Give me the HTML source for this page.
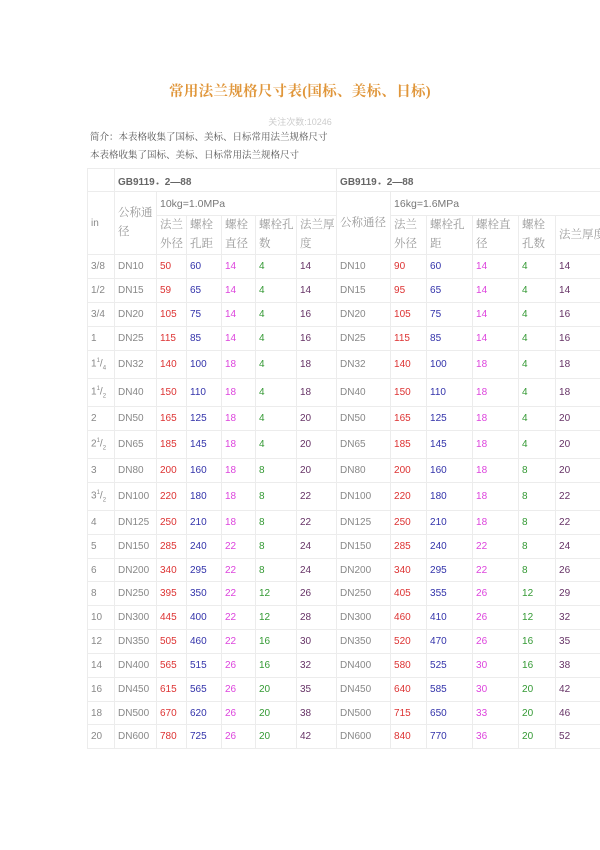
<!DOCTYPE html>
<html><head><meta charset="utf-8"><style>
html,body{margin:0;padding:0;background:#fff;width:600px;height:850px;overflow:hidden;position:relative}
body{font-family:"Liberation Sans","Noto Sans CJK SC",sans-serif}
.t{position:absolute;left:0;width:600px;text-align:center;top:80px;font-family:"Liberation Serif","Noto Serif CJK SC",serif;font-size:14.5px;color:#e0963a;letter-spacing:0.3px;font-weight:bold}
.c{position:absolute;left:0;width:600px;text-align:center;top:115px;font-size:9px;color:#ccc}
.i{position:absolute;left:90px;font-family:"Liberation Serif","Noto Serif CJK SC",serif;font-size:9.5px;color:#555}
table{position:absolute;left:87px;top:168px;border-collapse:collapse;table-layout:fixed;width:540px}
td{border:1px solid #ececec;padding:0 0 0 3px;font-size:10px;color:#888;vertical-align:middle;overflow:hidden;white-space:nowrap}
.h{color:#666;font-weight:bold}
.zh{font-family:"Liberation Serif","Noto Serif CJK SC",serif;color:#999;white-space:normal;line-height:19px;font-size:11.5px;word-break:break-all}
.r{color:#d33}.b{color:#33a}.m{color:#d4d}.g{color:#393}.p{color:#636}
sup,sub{font-size:6px}
</style></head><body>
<div class="t">常用法兰规格尺寸表(国标、美标、日标)</div>
<div class="c">关注次数:10246</div>
<div class="i" style="top:129px">简介：本表格收集了国标、美标、日标常用法兰规格尺寸</div>
<div class="i" style="top:147px">本表格收集了国标、美标、日标常用法兰规格尺寸</div>
<table>
<colgroup><col style="width:27px"><col style="width:42px"><col style="width:30px"><col style="width:35px"><col style="width:34px"><col style="width:41px"><col style="width:40px"><col style="width:54px"><col style="width:36px"><col style="width:46px"><col style="width:46px"><col style="width:37px"><col style="width:72px"></colgroup>
<tr style="height:23px"><td></td><td class="h" colspan="6">GB9119．2—88</td><td class="h" colspan="6">GB9119．2—88</td></tr>
<tr style="height:24px"><td rowspan="2">in</td><td rowspan="2" class="zh">公称通径</td><td colspan="5" style="font-size:10.5px;color:#777">10kg=1.0MPa</td><td rowspan="2" class="zh">公称通径</td><td colspan="5" style="font-size:10.5px;color:#777">16kg=1.6MPa</td></tr>
<tr style="height:38px"><td class="zh">法兰外径</td><td class="zh">螺栓孔距</td><td class="zh">螺栓直径</td><td class="zh">螺栓孔数</td><td class="zh">法兰厚度</td><td class="zh">法兰外径</td><td class="zh">螺栓孔距</td><td class="zh">螺栓直径</td><td class="zh">螺栓孔数</td><td class="zh">法兰厚度</td></tr>
<tr style="height:24px"><td>3/8</td><td>DN10</td><td class="r">50</td><td class="b">60</td><td class="m">14</td><td class="g">4</td><td class="p">14</td><td>DN10</td><td class="r">90</td><td class="b">60</td><td class="m">14</td><td class="g">4</td><td class="p">14</td></tr>
<tr style="height:24px"><td>1/2</td><td>DN15</td><td class="r">59</td><td class="b">65</td><td class="m">14</td><td class="g">4</td><td class="p">14</td><td>DN15</td><td class="r">95</td><td class="b">65</td><td class="m">14</td><td class="g">4</td><td class="p">14</td></tr>
<tr style="height:24px"><td>3/4</td><td>DN20</td><td class="r">105</td><td class="b">75</td><td class="m">14</td><td class="g">4</td><td class="p">16</td><td>DN20</td><td class="r">105</td><td class="b">75</td><td class="m">14</td><td class="g">4</td><td class="p">16</td></tr>
<tr style="height:24px"><td>1</td><td>DN25</td><td class="r">115</td><td class="b">85</td><td class="m">14</td><td class="g">4</td><td class="p">16</td><td>DN25</td><td class="r">115</td><td class="b">85</td><td class="m">14</td><td class="g">4</td><td class="p">16</td></tr>
<tr style="height:28px"><td>1<sup>1</sup>/<sub>4</sub></td><td>DN32</td><td class="r">140</td><td class="b">100</td><td class="m">18</td><td class="g">4</td><td class="p">18</td><td>DN32</td><td class="r">140</td><td class="b">100</td><td class="m">18</td><td class="g">4</td><td class="p">18</td></tr>
<tr style="height:28px"><td>1<sup>1</sup>/<sub>2</sub></td><td>DN40</td><td class="r">150</td><td class="b">110</td><td class="m">18</td><td class="g">4</td><td class="p">18</td><td>DN40</td><td class="r">150</td><td class="b">110</td><td class="m">18</td><td class="g">4</td><td class="p">18</td></tr>
<tr style="height:24px"><td>2</td><td>DN50</td><td class="r">165</td><td class="b">125</td><td class="m">18</td><td class="g">4</td><td class="p">20</td><td>DN50</td><td class="r">165</td><td class="b">125</td><td class="m">18</td><td class="g">4</td><td class="p">20</td></tr>
<tr style="height:28px"><td>2<sup>1</sup>/<sub>2</sub></td><td>DN65</td><td class="r">185</td><td class="b">145</td><td class="m">18</td><td class="g">4</td><td class="p">20</td><td>DN65</td><td class="r">185</td><td class="b">145</td><td class="m">18</td><td class="g">4</td><td class="p">20</td></tr>
<tr style="height:24px"><td>3</td><td>DN80</td><td class="r">200</td><td class="b">160</td><td class="m">18</td><td class="g">8</td><td class="p">20</td><td>DN80</td><td class="r">200</td><td class="b">160</td><td class="m">18</td><td class="g">8</td><td class="p">20</td></tr>
<tr style="height:28px"><td>3<sup>1</sup>/<sub>2</sub></td><td>DN100</td><td class="r">220</td><td class="b">180</td><td class="m">18</td><td class="g">8</td><td class="p">22</td><td>DN100</td><td class="r">220</td><td class="b">180</td><td class="m">18</td><td class="g">8</td><td class="p">22</td></tr>
<tr style="height:24px"><td>4</td><td>DN125</td><td class="r">250</td><td class="b">210</td><td class="m">18</td><td class="g">8</td><td class="p">22</td><td>DN125</td><td class="r">250</td><td class="b">210</td><td class="m">18</td><td class="g">8</td><td class="p">22</td></tr>
<tr style="height:24px"><td>5</td><td>DN150</td><td class="r">285</td><td class="b">240</td><td class="m">22</td><td class="g">8</td><td class="p">24</td><td>DN150</td><td class="r">285</td><td class="b">240</td><td class="m">22</td><td class="g">8</td><td class="p">24</td></tr>
<tr style="height:23px"><td>6</td><td>DN200</td><td class="r">340</td><td class="b">295</td><td class="m">22</td><td class="g">8</td><td class="p">24</td><td>DN200</td><td class="r">340</td><td class="b">295</td><td class="m">22</td><td class="g">8</td><td class="p">26</td></tr>
<tr style="height:24px"><td>8</td><td>DN250</td><td class="r">395</td><td class="b">350</td><td class="m">22</td><td class="g">12</td><td class="p">26</td><td>DN250</td><td class="r">405</td><td class="b">355</td><td class="m">26</td><td class="g">12</td><td class="p">29</td></tr>
<tr style="height:24px"><td>10</td><td>DN300</td><td class="r">445</td><td class="b">400</td><td class="m">22</td><td class="g">12</td><td class="p">28</td><td>DN300</td><td class="r">460</td><td class="b">410</td><td class="m">26</td><td class="g">12</td><td class="p">32</td></tr>
<tr style="height:24px"><td>12</td><td>DN350</td><td class="r">505</td><td class="b">460</td><td class="m">22</td><td class="g">16</td><td class="p">30</td><td>DN350</td><td class="r">520</td><td class="b">470</td><td class="m">26</td><td class="g">16</td><td class="p">35</td></tr>
<tr style="height:24px"><td>14</td><td>DN400</td><td class="r">565</td><td class="b">515</td><td class="m">26</td><td class="g">16</td><td class="p">32</td><td>DN400</td><td class="r">580</td><td class="b">525</td><td class="m">30</td><td class="g">16</td><td class="p">38</td></tr>
<tr style="height:24px"><td>16</td><td>DN450</td><td class="r">615</td><td class="b">565</td><td class="m">26</td><td class="g">20</td><td class="p">35</td><td>DN450</td><td class="r">640</td><td class="b">585</td><td class="m">30</td><td class="g">20</td><td class="p">42</td></tr>
<tr style="height:23px"><td>18</td><td>DN500</td><td class="r">670</td><td class="b">620</td><td class="m">26</td><td class="g">20</td><td class="p">38</td><td>DN500</td><td class="r">715</td><td class="b">650</td><td class="m">33</td><td class="g">20</td><td class="p">46</td></tr>
<tr style="height:24px"><td>20</td><td>DN600</td><td class="r">780</td><td class="b">725</td><td class="m">26</td><td class="g">20</td><td class="p">42</td><td>DN600</td><td class="r">840</td><td class="b">770</td><td class="m">36</td><td class="g">20</td><td class="p">52</td></tr>
</table>
</body></html>
